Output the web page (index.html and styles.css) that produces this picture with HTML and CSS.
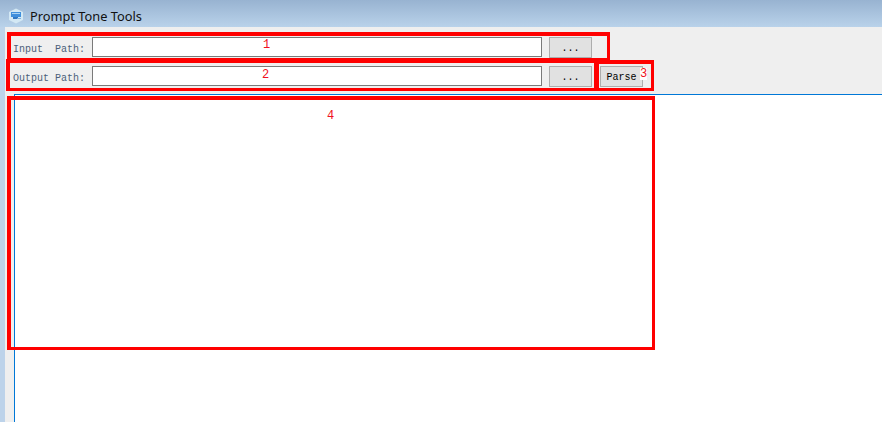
FILE: index.html
```html
<!DOCTYPE html>
<html lang="en">
<head>
    <meta charset="UTF-8">
    <title>Prompt Tone Tools</title>
    <link rel="stylesheet" href="styles.css">
</head>
<body>
    <div class="window">
        <header class="titlebar">
            <svg class="app-icon" width="16" height="16" viewBox="0 0 16 16">
                <path d="M8 0.500 L15 4 V12 L8 15.500 L1 12 V4 Z" fill="#d3e8f4"/>
                <rect x="3" y="4" width="10" height="5" fill="#3f8fdc"/>
                <rect x="4" y="5" width="8" height="1" fill="#a9d2f2"/>
                <rect x="5" y="9" width="5" height="2" fill="#2f78c4"/>
                <rect x="9" y="10" width="4" height="1" fill="#7fb2de"/>
            </svg>
            <span class="title">Prompt Tone Tools</span>
        </header>

        <main class="client">
            <div class="row">
                <label class="row-label">Input&nbsp;&nbsp;Path:</label>
                <input class="path-input" type="text">
                <button class="btn">...</button>
            </div>
            <div class="row">
                <label class="row-label">Output Path:</label>
                <input class="path-input" type="text">
                <button class="btn">...</button>
                <button class="btn btn-parse">Parse</button>
            </div>
            <div class="output-panel"></div>
        </main>

        <!-- annotations drawn over the screenshot -->
        <div class="mark mark-1"></div>
        <div class="mark mark-2"></div>
        <div class="mark mark-3"></div>
        <div class="mark mark-4"></div>
        <span class="mark-num num-1">1</span>
        <span class="mark-num num-2">2</span>
        <span class="mark-num num-3">3</span>
        <span class="mark-num num-4">4</span>
    </div>
</body>
</html>
```

FILE: styles.css
```css
html, body {
    margin: 0;
    height: 100%;
    overflow: hidden;
}
.window {
    position: relative;
    display: flex;
    flex-direction: column;
    height: 422px;
    background-color: #bdd3ea;
}
.titlebar {
    display: flex;
    align-items: center;
    height: 27px;
    flex-shrink: 0;
    padding: 5px 0 0 8px;
    gap: 6px;
    box-sizing: border-box;
    background: linear-gradient(#98b3d1, #b9d2ea);
}
.title {
    font-family: "Noto Sans", sans-serif;
    font-size: 12.8px;
    color: #111;
}
.client {
    flex: 1;
    display: flex;
    flex-direction: column;
    margin-left: 5px;
    padding-top: 10px;
    background-color: #efefef;
}
.row {
    display: flex;
    align-items: flex-start;
    height: 29px;
}
.row-label {
    width: 79px;
    margin-left: 8px;
    padding-top: 7px;
    font-family: "Liberation Mono", monospace;
    font-size: 10px;
    line-height: 12px;
    color: #4c5f7a;
    white-space: nowrap;
}
.path-input {
    width: 450px;
    height: 20px;
    margin: 0;
    padding: 0;
    box-sizing: border-box;
    border: 1px solid #7a7a7a;
    background-color: #fff;
}
.btn {
    width: 43px;
    height: 21px;
    margin: 0 0 0 7px;
    padding: 2px 0 0;
    box-sizing: border-box;
    border: 1px solid #adadad;
    background-color: #e1e1e1;
    font-family: "Liberation Mono", monospace;
    font-size: 10px;
    color: #000;
}
.btn-parse {
    margin-left: 8px;
}
.output-panel {
    flex: 1;
    margin: -1px 0 0 9px;
    background-color: #fff;
    border-top: 1px solid #0078d7;
    border-left: 1px solid #0078d7;
}
.mark {
    position: absolute;
    box-sizing: border-box;
    border: 4px solid #f00;
}
.mark-1 {
    left: 7px;
    top: 32px;
    width: 603px;
    height: 30px;
    border-right-width: 3px;
}
.mark-2 {
    left: 6px;
    top: 59px;
    width: 592px;
    height: 32px;
    border-bottom-width: 3px;
}
.mark-3 {
    left: 595px;
    top: 60px;
    width: 59px;
    height: 31px;
    border-bottom-width: 3px;
    border-right-width: 3px;
}
.mark-4 {
    left: 7px;
    top: 96px;
    width: 648px;
    height: 254px;
    border-width: 4px 3px 3px 4px;
}
.mark-num {
    position: absolute;
    font-family: "Liberation Mono", monospace;
    font-size: 12px;
    line-height: 12px;
    color: #f01020;
}
.num-1 {
    left: 263px;
    top: 39px;
}
.num-2 {
    left: 262px;
    top: 69px;
}
.num-3 {
    left: 640px;
    top: 68px;
    background-color: #fff;
}
.num-4 {
    left: 327px;
    top: 110px;
}
```
